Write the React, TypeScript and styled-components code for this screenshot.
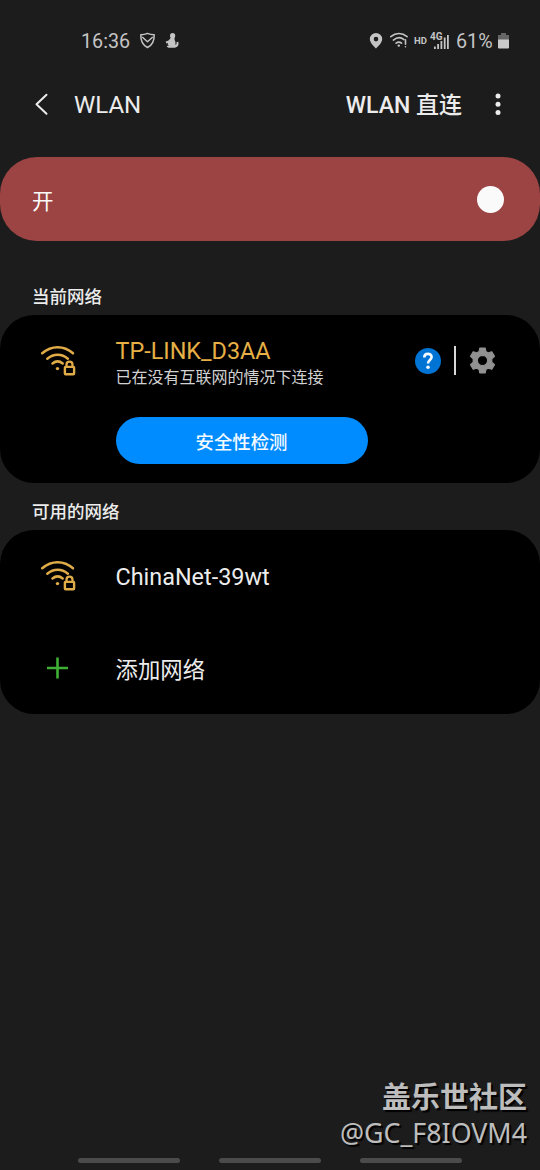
import React from 'react';
import styled, { createGlobalStyle } from 'styled-components';

const GlobalStyle = createGlobalStyle`
  * { box-sizing: border-box; }
  body { margin: 0; background: #1c1c1c; }
  svg { display: block; flex: none; }
  button { border: 0; padding: 0; background: none; font: inherit; color: inherit; }
`;

const Screen = styled.div`
  width: 540px;
  height: 1170px;
  display: flex;
  flex-direction: column;
  overflow: hidden;
  background: #1c1c1c;
  color: #ececec;
  font-family: Roboto, 'Noto Sans CJK SC', sans-serif;
`;

const StatusBar = styled.header`
  display: flex;
  align-items: center;
  height: 52px;
  padding: 30px 31px 0 81px;
  color: #c4c4c4;
  font-size: 19.7px;
  line-height: 22px;
  white-space: nowrap;
`;

const Clock = styled.span`
  width: 58px;
  padding-top: 2px;
`;

const StatusIcons = styled.div<{ $end?: boolean }>`
  display: flex;
  align-items: center;
  ${({ $end }) => $end && 'margin-left: auto;'}
`;

const NoticeIcon = styled.svg`
  margin-left: 9px;
`;

const WifiStatusIcon = styled.svg`
  margin: 0 5px 0 7px;
`;

const HdMark = styled.span`
  width: 16px;
  font-size: 9.5px;
  font-weight: 700;
`;

const SignalGroup = styled.span`
  position: relative;
  width: 20px;
  height: 18px;
  margin-right: 6px;
`;

const NetworkType = styled.span`
  position: absolute;
  left: 0;
  top: 0;
  font-size: 10px;
  line-height: 10px;
  font-weight: 700;
`;

const SignalBars = styled.svg`
  position: absolute;
  right: 1px;
  bottom: 1px;
`;

const Percent = styled.span`
  width: 42px;
  padding-top: 2px;
`;

const TitleBar = styled.nav`
  display: flex;
  align-items: center;
  height: 105px;
  padding: 0 39px 1px 34px;
`;

const Title = styled.h1`
  margin: 0 auto 0 24px;
  padding-top: 2px;
  font-size: 24px;
  font-weight: 400;
  line-height: 32px;
`;

const DirectButton = styled.button`
  margin-right: 33px;
  padding-top: 3px;
  font-size: 23px;
  font-weight: 500;
  line-height: 32px;
`;

const MasterSwitch = styled.section`
  display: flex;
  align-items: center;
  justify-content: space-between;
  height: 84px;
  padding: 0 36px 0 32px;
  border-radius: 37px;
  background: #9c4444;
  color: #fafafa;
  font-size: 21.5px;
`;

const Knob = styled.span`
  width: 27px;
  height: 27px;
  border-radius: 50%;
  background: #fafafa;
`;

const SectionLabel = styled.h2<{ $height: number }>`
  display: flex;
  align-items: flex-end;
  height: ${({ $height }) => $height}px;
  margin: 0;
  padding: 0 32px 6px;
  font-size: 17.5px;
  font-weight: 500;
  line-height: 24px;
`;

const Card = styled.section<{ $height: number }>`
  height: ${({ $height }) => $height}px;
  border-radius: 34px;
  background: #000;
`;

const NetworkRow = styled.div<{ $height: number }>`
  display: flex;
  align-items: center;
  height: ${({ $height }) => $height}px;
  padding: 0 44px 0 40px;
`;

const IconSlot = styled.div`
  width: 75.5px;
  flex: none;
`;

const NetworkInfo = styled.div`
  flex: 1;
  padding-top: 4px;
`;

const NetworkName = styled.div<{ $active?: boolean }>`
  font-size: 23.4px;
  line-height: 30px;
  color: ${({ $active }) => ($active ? '#e6b046' : '#ececec')};
`;

const PlainName = styled(NetworkName)`
  padding-top: 2px;
`;

const NetworkStatus = styled.div`
  font-size: 16px;
  line-height: 24px;
  color: #d2d2d2;
`;

const AddLabel = styled.div`
  padding-top: 4px;
  font-size: 22.4px;
  line-height: 32px;
`;

const HelpBadge = styled.span`
  width: 26px;
  height: 26px;
  border-radius: 50%;
  background: #0074d4;
  display: flex;
  align-items: center;
  justify-content: center;
`;

const Divider = styled.span`
  width: 2px;
  height: 29px;
  margin: 0 13px;
  background: #d8d8d8;
`;

const CheckButton = styled.button`
  display: block;
  width: 252px;
  height: 47px;
  margin: 11px 0 0 115.5px;
  border-radius: 24px;
  background: #008cff;
  color: #f4faff;
  font-size: 18.4px;
  font-weight: 500;
`;

const Watermark = styled.footer`
  margin: auto 13px 0 0;
  text-align: right;
  color: #bdbdbd;
  text-shadow: 2px 2px 1px #000;
`;

const Community = styled.div`
  font: 700 29px/38px 'Noto Sans CJK SC', sans-serif;
`;

const Author = styled.div`
  font: 400 26.8px/37px 'Noto Sans', 'Noto Sans CJK SC', sans-serif;
`;

const NavHints = styled.div`
  display: flex;
  justify-content: center;
  gap: 39px;
  height: 19px;
  padding-top: 7px;
`;

const Hint = styled.span`
  width: 102px;
  height: 5px;
  border-radius: 3px;
  background: #4b4b4b;
`;

const SecureWifi = () => (
  <svg width="36" height="32" viewBox="0 0 36 32" fill="none" stroke="#e0ac48" strokeWidth="2.5" strokeLinecap="round">
    <path d="M2.2 8.3C11.5.1 23.8.1 33 8.3" />
    <path d="M7.3 13.7c6.2-5.4 14.5-5.4 20.6 0" />
    <path d="M12.5 18.5c3.2-2.6 7.1-2.6 10.2 0" />
    <circle cx="17.5" cy="23.6" r="1.7" fill="#e0ac48" stroke="none" />
    <rect x="24.9" y="21.9" width="9.2" height="7.3" rx=".7" strokeWidth="2.4" />
    <path d="M26.5 21v-1.3c0-4 6-4 6 0V21" strokeWidth="2.3" />
  </svg>
);

const App = () => (
  <Screen>
    <GlobalStyle />
    <StatusBar>
      <Clock>16:36</Clock>
      <StatusIcons>
        <svg width="17" height="18" viewBox="0 0 17 18" fill="none" stroke="#c4c4c4" strokeWidth="1.5" strokeLinejoin="round">
          <path d="M8.5 1.4c2.4 1.2 4.500 1.400 6.700 1.400.2 6-1.500 10.200-6.700 12.700C3.300 13 1.600 8.800 1.800 2.800 4 2.800 6.100 2.600 8.500 1.400Z" />
          <path d="m3.200 5 5.300 4.800L13.800 5" />
        </svg>
        <NoticeIcon width="15" height="18" viewBox="0 0 15 18" fill="#c4c4c4">
          <circle cx="7.600" cy="3.700" r="2.600" />
          <path d="M5.800 5.500h3.700c.3 1.200-.2 2 .4 3.200.8 1.500.8 2.800.2 4.100 1.200-.1 1.800-.7 1.300-2.500l1.900-.5c1 3.700-1 6-4.600 6H4.600C3 15.800 2 15.200 1.700 14l2.200-.5C2.500 12.600 2.500 11.700 3 10.700l-1.800.7L.7 9.600C3.200 9 4.700 7.700 5.800 5.500Z" />
        </NoticeIcon>
      </StatusIcons>
      <StatusIcons $end>
        <svg width="14" height="18" viewBox="0 0 14 18" fill="#c4c4c4">
          <path fillRule="evenodd" d="M7 .9A6.200 6.200 0 0 0 .8 7.100C.8 11.500 7 16.500 7 16.500s6.200-5 6.200-9.400A6.200 6.200 0 0 0 7 .9Zm0 3.900a2.300 2.300 0 1 1 0 4.600 2.300 2.300 0 0 1 0-4.600Z" />
        </svg>
        <WifiStatusIcon width="19" height="18" viewBox="0 0 19 18" fill="none" stroke="#c4c4c4" strokeWidth="1.6" strokeLinecap="round">
          <path d="M.8 4.700c5-4.100 11.300-4.100 16.300 0M3.400 8.100c3.500-2.900 7.500-3 10.600-.5M6.100 11.200c1.900-1.500 3.600-1.500 5.400 0" />
          <circle cx="8.800" cy="13.600" r="1.200" fill="#c4c4c4" stroke="none" />
          <path d="M15.500 7.800v4.400M15.500 14.700v.1" />
        </WifiStatusIcon>
        <HdMark>HD</HdMark>
        <SignalGroup>
          <NetworkType>4G</NetworkType>
          <SignalBars width="15" height="15" viewBox="0 0 15 15" fill="#c4c4c4">
            <path d="M0 12.500h1.800V15H0zM3.200 10H5v5H3.200zM6.500 7h1.800v8H6.500zM9.800 3.500h1.800V15H9.800zM13 1h1.800v14H13z" />
          </SignalBars>
        </SignalGroup>
        <Percent>61%</Percent>
        <svg width="11" height="18" viewBox="0 0 11 18">
          <path d="M3 1h5v2h3v5H0V3h3z" fill="#666" />
          <path d="M0 7.500h11V15.500a1 1 0 0 1-1 1H1a1 1 0 0 1-1-1z" fill="#c9c9c9" />
        </svg>
      </StatusIcons>
    </StatusBar>
    <TitleBar>
      <svg width="16" height="24" viewBox="0 0 16 24" fill="none" stroke="#ececec" strokeWidth="2" strokeLinecap="round" strokeLinejoin="round">
        <path d="M12.500 2.700 2.500 12.200l10 9.500" />
      </svg>
      <Title>WLAN</Title>
      <DirectButton>WLAN 直连</DirectButton>
      <svg width="6" height="24" viewBox="0 0 6 24" fill="#ececec">
        <circle cx="3" cy="4" r="2.500" />
        <circle cx="3" cy="12.200" r="2.500" />
        <circle cx="3" cy="20.400" r="2.500" />
      </svg>
    </TitleBar>
    <MasterSwitch>
      <span>开</span>
      <Knob />
    </MasterSwitch>
    <SectionLabel $height={74}>当前网络</SectionLabel>
    <Card $height={168}>
      <NetworkRow $height={91}>
        <IconSlot><SecureWifi /></IconSlot>
        <NetworkInfo>
          <NetworkName $active>TP-LINK_D3AA</NetworkName>
          <NetworkStatus>已在没有互联网的情况下连接</NetworkStatus>
        </NetworkInfo>
        <HelpBadge>
          <svg width="12" height="18" viewBox="0 0 12 18" fill="none" stroke="#f4faff" strokeWidth="2.600">
            <path d="M2.300 5.400c0-4.700 7.300-4.600 7.300-.4 0 3-3.600 3.100-3.600 6.600" />
            <circle cx="6" cy="15.200" r="1.800" fill="#f4faff" stroke="none" />
          </svg>
        </HelpBadge>
        <Divider />
        <svg width="27" height="27" viewBox="0 0 27 27" fill="#919191">
          <path fillRule="evenodd" stroke="#919191" strokeWidth="1.200" strokeLinejoin="round" d="M10.800 1h5.400l.7 3.500 2.400 1.400 3.500-1.200 2.700 4.600-2.700 2.400v3.600l2.700 2.400-2.700 4.600-3.500-1.200-2.400 1.400-.7 3.500h-5.400l-.7-3.500-2.400-1.400-3.500 1.200-2.700-4.600 2.700-2.400v-3.600L1.500 9.300l2.700-4.600 3.500 1.200 2.400-1.400zM13.500 8.300a5.200 5.200 0 1 0 0 10.400 5.200 5.200 0 0 0 0-10.400Z" />
        </svg>
      </NetworkRow>
      <CheckButton>安全性检测</CheckButton>
    </Card>
    <SectionLabel $height={47}>可用的网络</SectionLabel>
    <Card $height={184}>
      <NetworkRow $height={92}>
        <IconSlot><SecureWifi /></IconSlot>
        <PlainName>ChinaNet-39wt</PlainName>
      </NetworkRow>
      <NetworkRow $height={92}>
        <IconSlot>
          <svg width="36" height="24" viewBox="0 0 36 24" stroke="#3faf35" strokeWidth="2.600">
            <path d="M7 12h21M17.500 1.500v21" />
          </svg>
        </IconSlot>
        <AddLabel>添加网络</AddLabel>
      </NetworkRow>
    </Card>
    <Watermark>
      <Community>盖乐世社区</Community>
      <Author>@GC_F8IOVM4</Author>
    </Watermark>
    <NavHints>
      <Hint />
      <Hint />
      <Hint />
    </NavHints>
  </Screen>
);

export default App;
